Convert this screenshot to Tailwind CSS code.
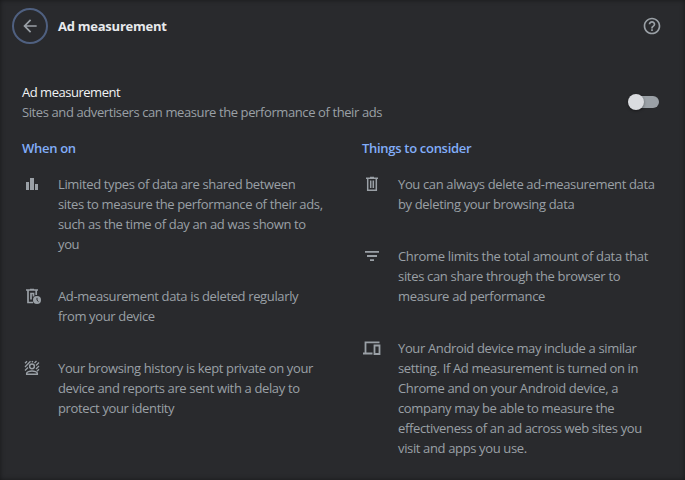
<!DOCTYPE html>
<html lang="en">
<head>
  <meta charset="UTF-8" />
  <meta name="viewport" content="width=device-width, initial-scale=1.0" />
  <script src="https://cdn.jsdelivr.net/npm/@tailwindcss/browser@4"></script>
  <title>Ad measurement</title>
</head>
<body class="h-screen overflow-hidden bg-[#292a2d] font-['Open_Sans','Noto_Sans',sans-serif] text-[13px] leading-5 tracking-[-0.36px] text-[#9aa0a6] whitespace-nowrap">
  <div class="h-full shadow-[inset_0_0_5px_0_rgba(0,0,0,0.45)]">
    <header class="flex items-center pt-2 pl-3 pr-[23px]">
      <button class="flex size-9 items-center justify-center rounded-full border-2 border-[#4f6080]" aria-label="Back">
        <svg class="size-5" viewBox="0 0 24 24" fill="currentColor"><path d="M20 11H7.83l5.59-5.59L12 4l-8 8 8 8 1.41-1.41L7.83 13H20v-2z"/></svg>
      </button>
      <h1 class="ml-2.5 font-bold tracking-[-0.25px] text-[#e8eaed]">Ad measurement</h1>
      <svg class="ml-auto size-5" viewBox="0 0 24 24" fill="currentColor"><path d="M11 18h2v-2h-2v2zm1-16C6.48 2 2 6.48 2 12s4.48 10 10 10 10-4.48 10-10S17.52 2 12 2zm0 18c-4.41 0-8-3.59-8-8s3.59-8 8-8 8 3.59 8 8-3.59 8-8 8zm0-14c-2.21 0-4 1.79-4 4h2c0-1.1.9-2 2-2s2 .9 2 2c0 2-3 1.75-3 5h2c0-2.25 3-2.5 3-5 0-2.21-1.79-4-4-4z"/></svg>
    </header>

    <main class="px-[22px] pt-[38px]">
      <div class="flex items-center justify-between pr-1">
        <div>
          <h2 class="tracking-[-0.48px] text-[#f1f3f4]">Ad measurement</h2>
          <p class="tracking-[-0.4px]">Sites and advertisers can measure the performance of their ads</p>
        </div>
        <button class="flex h-3 w-[30px] items-center rounded-full bg-[#9aa0a6]" aria-label="Ad measurement">
          <span class="-ml-px size-4 shrink-0 rounded-full bg-[#dadce0] shadow-[0_1px_3px_rgba(0,0,0,0.4)]"></span>
        </button>
      </div>

      <div class="mt-4 grid grid-cols-[340px_1fr]">
        <section>
          <h3 class="font-semibold tracking-[-0.3px] text-[#82aef9]">When on</h3>
          <ul class="mt-4 space-y-8">
            <li class="flex gap-4">
              <svg class="size-5 shrink-0" viewBox="0 0 20 20" fill="currentColor"><path d="M4 8h3v8H4zM8 4h4v12H8zM13 10h3v6h-3z"/></svg>
              <p>Limited types of data are shared between<br>sites to measure the performance of their ads,<br>such as the time of day an ad was shown to<br>you</p>
            </li>
            <li class="flex gap-4">
              <svg class="size-5 shrink-0" viewBox="0 0 20 20">
                <path d="M4 4h12M8 3.500h4M6 4.500v12h5M14.200 4.500v4.500M9 13.500V7.500h2.500v3" fill="none" stroke="currentColor" stroke-width="1.700"/>
                <circle cx="15" cy="14" r="4" fill="currentColor"/>
                <path d="M15 11.800v2.400l1.500 1.400" fill="none" stroke="#292a2d" stroke-width="1"/>
              </svg>
              <p>Ad-measurement data is deleted regularly<br>from your device</p>
            </li>
            <li class="flex gap-4">
              <svg class="size-5 shrink-0" viewBox="0 0 20 20" fill="none" stroke="currentColor" stroke-width="1.300">
                <path d="M3 5.300l2-2M3 9l5.500-5.700M3 12.500l3-3M9.800 4.300l1.200-1.200M12.500 5l2-2M14 7.500l3-3M14 11l3-3M15 13.200l2-2"/>
                <circle cx="10" cy="8.300" r="2.400" stroke-width="1.500"/>
                <path d="M4.700 16.200v-1c0-1.300 3-2.200 5.300-2.200s5.300.9 5.300 2.200v1z" stroke-width="1.500"/>
              </svg>
              <p>Your browsing history is kept private on your<br>device and reports are sent with a delay to<br>protect your identity</p>
            </li>
          </ul>
        </section>

        <section>
          <h3 class="font-semibold tracking-[-0.3px] text-[#82aef9]">Things to consider</h3>
          <ul class="mt-4 space-y-8">
            <li class="flex gap-4">
              <svg class="size-5 shrink-0" viewBox="0 0 20 20" fill="none" stroke="currentColor" stroke-width="1.500">
                <path d="M4 4.200h12M8 3.500h4M5.700 4.500v11.700h8.600V4.500"/>
                <path d="M8.700 6.500v7.500M11.300 6.500v7.500"/>
              </svg>
              <p>You can always delete ad-measurement data<br>by deleting your browsing data</p>
            </li>
            <li class="flex gap-4">
              <svg class="size-5 shrink-0" viewBox="0 0 20 20" fill="currentColor"><path d="M3 5h14v1.700H3zM5 9h10v2H5zM8 13.300h4V15H8z"/></svg>
              <p class="tracking-[-0.32px]">Chrome limits the total amount of data that<br>sites can share through the browser to<br>measure ad performance</p>
            </li>
            <li class="flex gap-4">
              <svg class="size-5 shrink-0" viewBox="0 0 20 20" fill="none" stroke="currentColor" stroke-width="1.600">
                <path d="M17.500 4.300H3.500v10.500M1 15.500h9.500" stroke-width="1.800"/>
                <path d="M12.500 7.500h5v8.500h-5z" stroke-width="1.800"/>
              </svg>
              <p>Your Android device may include a similar<br>setting. If Ad measurement is turned on in<br>Chrome and on your Android device, a<br>company may be able to measure the<br>effectiveness of an ad across web sites you<br>visit and apps you use.</p>
            </li>
          </ul>
        </section>
      </div>
    </main>
  </div>
</body>
</html>
